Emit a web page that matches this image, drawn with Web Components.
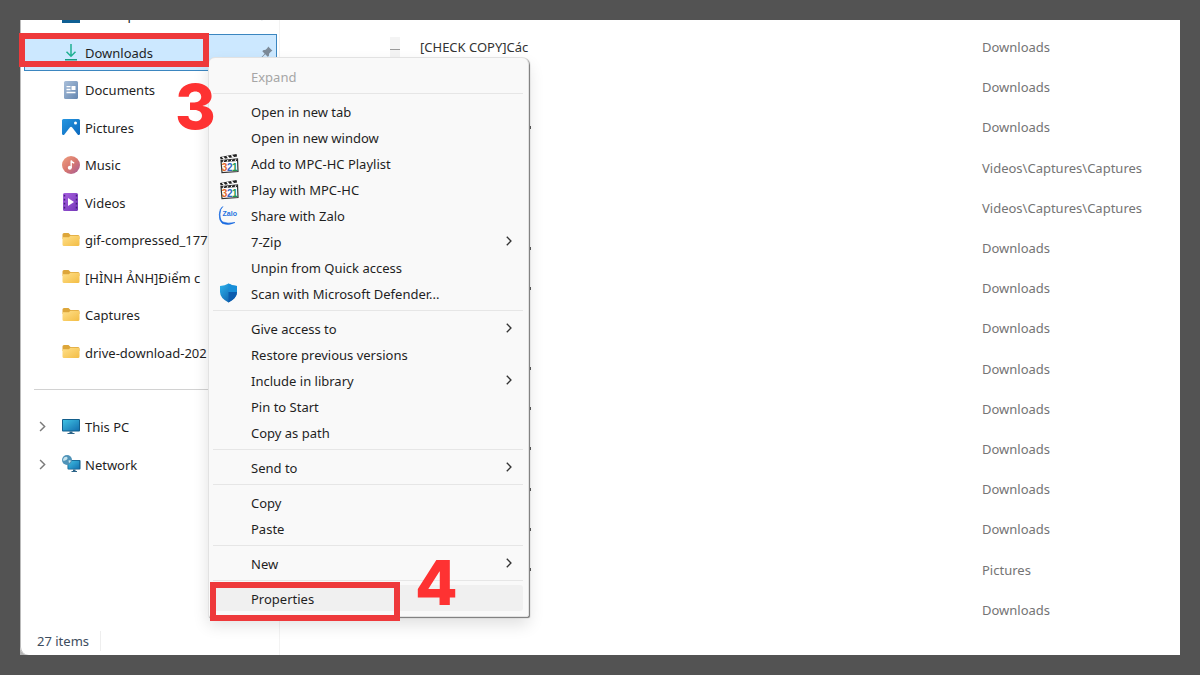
<!DOCTYPE html>
<html lang="en">
<head>
<meta charset="utf-8">
<meta name="viewport" content="width=device-width, initial-scale=1">
<title>File Explorer - Downloads properties</title>
<style>
  html, body { margin: 0; }
  body {
    box-sizing: border-box;
    min-height: 100vh;
    padding: 20px;
    display: grid;
    background: #535353;
    font: 13px/20px "Noto Sans", "Open Sans", sans-serif;
    color: #1f1f1f;
  }
</style>
</head>
<body>
<explorer-window></explorer-window>

<script>
const ICONS = {
  desktop: `<svg viewBox="0 0 18 18"><rect x="0" y="1" width="18" height="16" rx="1.5" fill="#1677b0"/><rect x="0" y="13" width="18" height="4" fill="#0f5f93"/></svg>`,
  download: `<svg viewBox="0 0 18 18"><path d="M9 1v12M4.500 8.700 9 13.200l4.500-4.500" fill="none" stroke="#1fb192" stroke-width="1.500"/><path d="M3 16.800h12" stroke="#179a80" stroke-width="1.500"/></svg>`,
  document: `<svg viewBox="0 0 18 18"><defs><linearGradient id="g" x2="1" y2="1"><stop stop-color="#a9bfda"/><stop offset="1" stop-color="#6486b0"/></linearGradient></defs><rect x="2" width="14" height="18" rx="1.500" fill="url(#g)"/><path d="M4.500 5.700h4M4.500 8.500h4M4.500 11.500h9" stroke="#fff" stroke-width="1.300"/><rect x="9.500" y="5" width="4" height="4" fill="#fff"/></svg>`,
  picture: `<svg viewBox="0 0 18 18"><defs><linearGradient id="g" x2="1" y2="1"><stop stop-color="#2696e0"/><stop offset="1" stop-color="#0b68bd"/></linearGradient></defs><rect y="1" width="18" height="16" rx="1.500" fill="url(#g)"/><path d="M2 17 8 9.300q1-1 2 0L16 17z" fill="#fff"/><circle cx="13.500" cy="5" r="1.500" fill="#fff"/></svg>`,
  music: `<svg viewBox="0 0 18 18"><defs><linearGradient id="g" x2="1" y2="1"><stop stop-color="#f0a080"/><stop offset=".5" stop-color="#d8786f"/><stop offset="1" stop-color="#a45a98"/></linearGradient></defs><circle cx="9" cy="9" r="9" fill="url(#g)"/><circle cx="7.800" cy="11.800" r="2" fill="#fff"/><path d="M9.200 12V4.500q.5 2 3 2.500" fill="none" stroke="#fff" stroke-width="1.400"/></svg>`,
  video: `<svg viewBox="0 0 18 18"><defs><linearGradient id="g" x2="1" y2="1"><stop stop-color="#a860e0"/><stop offset="1" stop-color="#7438b8"/></linearGradient></defs><rect x="1" width="15" height="18" rx="1.500" fill="url(#g)"/><path d="M2.500 1.800v15M14.500 1.800v15" stroke="#45207c" stroke-width="1.500" stroke-dasharray="1.800 2.200"/><path d="m6 5 6 4-6 4z" fill="#fff"/></svg>`,
  folder: `<svg viewBox="0 0 18 18"><defs><linearGradient id="g" x2="1" y2="1"><stop stop-color="#ffe08a"/><stop offset="1" stop-color="#f3bd45"/></linearGradient></defs><path d="M.5 3.500q0-1.500 1.500-1.500h4.500l2 2H16q1.500 0 1.500 1.500V8H.5z" fill="#dda63a"/><path d="M.5 6.300h6.300l1.700-1.500H16q1.500 0 1.500 1.500v7.200q0 1.500-1.500 1.500H2Q.5 15 .5 13.500z" fill="url(#g)"/></svg>`,
  pc: `<svg viewBox="0 0 18 18"><defs><linearGradient id="g" x2="1" y2="1"><stop stop-color="#3ec1e3"/><stop offset="1" stop-color="#1470b0"/></linearGradient></defs><rect x="0" y="1" width="18" height="12.500" rx="1" fill="#125e8b"/><rect x="1" y="2" width="16" height="10.500" fill="url(#g)"/><path d="M7.500 13.500h3V15h2v1h-7v-1h2z" fill="#2d6488"/></svg>`,
  network: `<svg viewBox="0 0 18 18"><defs><linearGradient id="g" x2="1" y2="1"><stop stop-color="#3ebfe3"/><stop offset="1" stop-color="#1572b0"/></linearGradient></defs><rect x="5.500" y="5" width="13" height="9.500" rx="1" fill="#125e8b"/><rect x="6.300" y="5.800" width="11" height="8" fill="url(#g)"/><path d="M11 14.500h2.500V16H15v1H9.500v-1H11z" fill="#2d6488"/><circle cx="5" cy="5" r="5" fill="#5093b8"/><path d="M2 2.500q3-1.500 3.500.2T3 5.500 1.300 4zM6.500 5.500q2-.8 2.500.5L7 8.300z" fill="#c5e4ee"/></svg>`,
  pin: `<svg viewBox="0 0 18 18"><path d="m10.500 2 5.500 5.500-1.800.9-2.400 2.400-.4 3.200-1.500 1L6.800 12l-4.300 4-.5-.5 4-4.300L3 8.100l1-1.500 3.200-.4 2.400-2.400z" fill="#7c8a98"/></svg>`,
  chevron: `<svg viewBox="0 0 18 18"><path d="m5 1.500 7.500 7.500L5 16.500" fill="none" stroke="currentColor" stroke-width="2.400"/></svg>`,
  mpc: `<svg viewBox="0 0 20 20"><path d="M2 7.500 18.500 6l.5 12.500L3 19.500z" fill="#fff" stroke="#333" stroke-width="1.200"/><path d="M1 4 17.500 1l.6 2.600L1.600 6.600z" fill="#222"/><path d="m3.500 3.800 2 2.300M8 3l2 2.300M12.500 2.200l2 2.300" stroke="#fff" stroke-width="1.500"/><path d="M2 7.500 18.500 6l.1 2L2.200 9.300z" fill="#222"/><path d="m5 7.200-1 2M9 6.900l-1 2M13 6.500l-1 2M17 6.200l-1 2" stroke="#fff"/><text y="17.800" font-family="Liberation Sans" font-size="10" font-weight="700"><tspan x="2.800" fill="#e2682b">3</tspan><tspan x="8" fill="#2d68c4">2</tspan><tspan x="13" fill="#239650">1</tspan></text></svg>`,
  zalo: `<svg viewBox="0 0 20 20"><path d="M3.800 1.500Q1 4 1 9.500q0 6 3 7.500 4 2 12 .5-6 3.500-12.500 1Q0 16 .3 9.500.5 3.500 3.800 1.500z" fill="#1769e0" stroke="#1769e0" stroke-width=".6"/><text x="3.600" y="11" font-family="Liberation Sans" font-size="7" font-weight="700" fill="#2571e0">Zalo</text></svg>`,
  shield: `<svg viewBox="0 0 20 20"><defs><linearGradient id="g" x2="1" y2="1"><stop stop-color="#2cb4ee"/><stop offset="1" stop-color="#0a4f9e"/></linearGradient></defs><path d="M9.500.5q3.500 2.300 8.500 2.500v6q0 6-8.500 10.500Q1 15 1 9V3q5-.2 8.500-2.500z" fill="url(#g)"/><path d="M9.500.5q3.500 2.300 8.500 2.500v6H9.500z" fill="#178ed8"/><path d="M9.500 9H18q0 6-8.500 10.500z" fill="#0b5cae"/></svg>`
};

class AppIcon extends HTMLElement {
  connectedCallback() {
    if (this.shadowRoot) return;
    this.attachShadow({ mode: "open" }).innerHTML = `
      <style>
        :host { display: block; flex: none; width: 18px; height: 18px; }
        svg { display: block; width: 100%; height: 100%; overflow: visible; }
      </style>${ICONS[this.getAttribute("name")] || ""}`;
  }
}
customElements.define("app-icon", AppIcon);

class NavItem extends HTMLElement {
  connectedCallback() {
    if (this.shadowRoot) return;
    this.attachShadow({ mode: "open" }).innerHTML = `
      <style>
        :host { display: grid; min-width: 0; }
        a {
          box-sizing: border-box; min-width: 0;
          display: grid; grid-template-columns: 12px 18px 1fr 14px; align-items: center;
          padding: 0 2px 0 12px; border: 1px solid transparent;
          color: inherit; text-decoration: none;
        }
        :host([selected]) a { background: #cce8ff; border-color: #3b86c0; }
        .chevron { width: 11px; height: 11px; color: #7b7b7b; }
        .icon { margin-left: 13px; }
        .label { margin-left: 18px; padding-top: 1px; white-space: nowrap; }
        .pin { width: 14px; height: 14px; }
      </style>
      <a href="#">
        ${this.hasAttribute("expandable") ? '<app-icon class="chevron" name="chevron"></app-icon>' : "<span></span>"}
        <app-icon class="icon" name="${this.getAttribute("icon")}"></app-icon>
        <span class="label"><slot></slot></span>
        ${this.hasAttribute("pinned") ? '<app-icon class="pin" name="pin"></app-icon>' : ""}
      </a>`;
  }
}
customElements.define("nav-item", NavItem);

class NavPane extends HTMLElement {
  connectedCallback() {
    if (this.shadowRoot) return;
    this.attachShadow({ mode: "open" }).innerHTML = `
      <style>
        :host { display: flex; flex-direction: column; box-sizing: border-box; padding: 0 2px 0 4px; border-right: 1px solid #f3f3f3; }
        .group { display: grid; grid-auto-rows: 1fr; }
        .quick { height: 375px; margin-top: -24px; }
        .places { height: 75px; }
        hr { width: 234px; margin: 18px 0; border: 0; border-top: 1px solid #d2d2d2; align-self: center; }
        footer { margin-top: auto; padding: 0 13px 4px; color: #3d4d5e; }
        footer span { display: inline-block; padding-right: 11px; border-right: 1px solid #eee; }
      </style>
      <nav class="group quick" aria-label="Quick access">
        <nav-item icon="desktop" pinned>Desktop</nav-item>
        <nav-item icon="download" selected pinned>Downloads</nav-item>
        <nav-item icon="document">Documents</nav-item>
        <nav-item icon="picture">Pictures</nav-item>
        <nav-item icon="music">Music</nav-item>
        <nav-item icon="video">Videos</nav-item>
        <nav-item icon="folder">gif-compressed_177</nav-item>
        <nav-item icon="folder">[HÌNH ẢNH]Điểm c</nav-item>
        <nav-item icon="folder">Captures</nav-item>
        <nav-item icon="folder">drive-download-202</nav-item>
      </nav>
      <hr>
      <nav class="group places" aria-label="Places">
        <nav-item icon="pc" expandable>This PC</nav-item>
        <nav-item icon="network" expandable>Network</nav-item>
      </nav>
      <footer><span>27 items</span></footer>`;
  }
}
customElements.define("nav-pane", NavPane);

class FileTable extends HTMLElement {
  connectedCallback() {
    if (this.shadowRoot) return;
    const captures = "Videos\\Captures\\Captures";
    const places = ["Downloads", "Downloads", "Downloads", captures, captures, "Downloads", "Downloads",
      "Downloads", "Downloads", "Downloads", "Downloads", "Downloads", "Downloads", "Pictures", "Downloads"];
    const clipped = [2, 5, 6, 8, 9, 10, 11, 12, 13];
    const rows = places.map((place, i) => `<tr>
      <td><div class="name ${clipped.includes(i) ? "clipped" : ""}">${i === 0 ? '<i></i><span>[CHECK COPY]Các</span>' : ""}</div></td>
      <td>${place}</td></tr>`).join("");
    this.attachShadow({ mode: "open" }).innerHTML = `
      <style>
        :host { display: block; padding: 7px 0 0 110px; }
        table { width: 100%; height: 603px; border-collapse: collapse; table-layout: fixed; }
        td { padding: 0; color: #747474; white-space: nowrap; }
        col.place { width: 198px; }
        .name { width: 141px; height: 20px; display: flex; align-items: center; gap: 20px; color: #333; }
        .name i { flex: none; width: 10px; height: 20px; background: linear-gradient(#999, #999) 0 12px / 10px 1px no-repeat #f4f4f4; }
        .clipped { box-sizing: border-box; height: 3px; border-right: 1px solid #555; }
      </style>
      <table aria-label="Files"><colgroup><col><col class="place"></colgroup><tbody>${rows}</tbody></table>`;
  }
}
customElements.define("file-table", FileTable);

class MenuItem extends HTMLElement {
  connectedCallback() {
    if (this.shadowRoot) return;
    const icon = this.getAttribute("icon");
    this.attachShadow({ mode: "open" }).innerHTML = `
      <style>
        :host { display: block; }
        button {
          width: 100%; height: 26px; padding: 0 7px 0 6px; border: 0; border-radius: 3px;
          display: grid; grid-template-columns: 32px 1fr 12px; align-items: center;
          background: transparent; color: inherit; font: inherit; text-align: left; white-space: nowrap;
        }
        :host([current]) button { background: #f0f0f0; }
        button:disabled { color: #a6a6a6; }
        .icon { width: 20px; height: 20px; }
        .label { padding-top: 1px; }
        .chevron { width: 10px; height: 10px; color: #333; }
      </style>
      <button type="button" role="menuitem" ${this.hasAttribute("disabled") ? "disabled" : ""}>
        ${icon ? `<app-icon class="icon" name="${icon}"></app-icon>` : "<span></span>"}
        <span class="label"><slot></slot></span>
        ${this.hasAttribute("submenu") ? '<app-icon class="chevron" name="chevron"></app-icon>' : ""}
      </button>`;
  }
}
customElements.define("menu-item", MenuItem);

class ContextMenu extends HTMLElement {
  connectedCallback() {
    if (this.shadowRoot) return;
    this.attachShadow({ mode: "open" }).innerHTML = `
      <style>
        :host {
          display: block; box-sizing: border-box; padding: 5px 5px 5px 4px;
          background: #f9f9f9; border: 1px solid #e2e2e2; border-radius: 7px 7px 2px 2px;
          box-shadow: 1px 1px 1px #777, 0 8px 16px rgba(0, 0, 0, .12);
        }
        hr { height: 1px; margin: 4px 0; border: 0; background: #e6e6e6; }
      </style>
      <div role="menu">
        <menu-item disabled>Expand</menu-item>
        <hr>
        <menu-item>Open in new tab</menu-item>
        <menu-item>Open in new window</menu-item>
        <menu-item icon="mpc">Add to MPC-HC Playlist</menu-item>
        <menu-item icon="mpc">Play with MPC-HC</menu-item>
        <menu-item icon="zalo">Share with Zalo</menu-item>
        <menu-item submenu>7-Zip</menu-item>
        <menu-item>Unpin from Quick access</menu-item>
        <menu-item icon="shield">Scan with Microsoft Defender...</menu-item>
        <hr>
        <menu-item submenu>Give access to</menu-item>
        <menu-item>Restore previous versions</menu-item>
        <menu-item submenu>Include in library</menu-item>
        <menu-item>Pin to Start</menu-item>
        <menu-item>Copy as path</menu-item>
        <hr>
        <menu-item submenu>Send to</menu-item>
        <hr>
        <menu-item>Copy</menu-item>
        <menu-item>Paste</menu-item>
        <hr>
        <menu-item submenu>New</menu-item>
        <hr>
        <menu-item current>Properties</menu-item>
      </div>`;
  }
}
customElements.define("context-menu", ContextMenu);

class StepMark extends HTMLElement {
  connectedCallback() {
    if (this.shadowRoot) return;
    this.attachShadow({ mode: "open" }).innerHTML = `
      <style>
        :host { display: block; font: 800 62px/62px Inter, "Open Sans", sans-serif; color: #fe3232; }
      </style><slot></slot>`;
  }
}
customElements.define("step-mark", StepMark);

class ExplorerWindow extends HTMLElement {
  connectedCallback() {
    if (this.shadowRoot) return;
    this.attachShadow({ mode: "open" }).innerHTML = `
      <style>
        :host { display: grid; position: relative; background: #b5b5b5; }
        main {
          display: grid; grid-template-columns: 260px 1fr; min-width: 0;
          background: #fff; border-radius: 0 0 0 8px; overflow: hidden;
          box-shadow: inset 1px 0 #bbb;
        }
        context-menu { position: absolute; left: 188px; top: 37px; width: 321px; }
        .frame { position: absolute; box-sizing: border-box; border: 6px solid #ee393b; pointer-events: none; }
        .first { left: -1px; top: 13px; width: 190px; height: 34px; }
        .second { left: 190px; top: 562px; width: 190px; height: 39px; }
        step-mark { position: absolute; }
        .three { left: 155px; top: 56px; }
        .four { left: 395px; top: 532px; }
      </style>
      <main>
        <nav-pane></nav-pane>
        <file-table></file-table>
      </main>
      <context-menu></context-menu>
      <div class="frame first"></div>
      <div class="frame second"></div>
      <step-mark class="three">3</step-mark>
      <step-mark class="four">4</step-mark>`;
  }
}
customElements.define("explorer-window", ExplorerWindow);
</script>
</body>
</html>
